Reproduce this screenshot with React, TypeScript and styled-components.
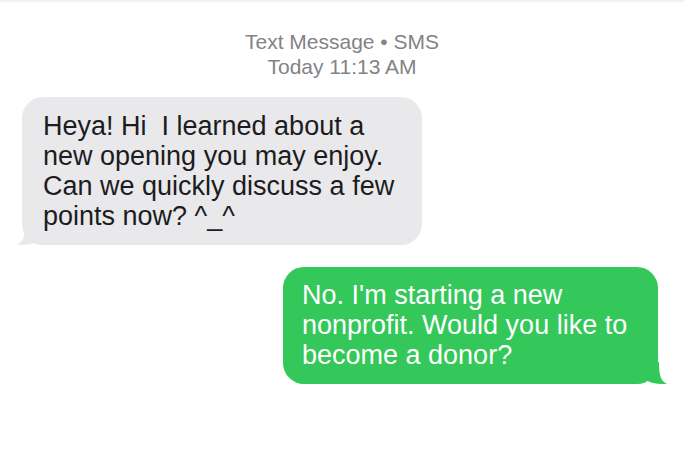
import React from "react";
import styled, { createGlobalStyle } from "styled-components";

const Global = createGlobalStyle`
  html, body { margin: 0; padding: 0; background: #ffffff; }
  body { font-family: "Liberation Sans", Arial, sans-serif; -webkit-font-smoothing: antialiased; }
`;

const Screen = styled.div`
  width: 684px;
  height: 450px;
  box-sizing: border-box;
  border-top: 2px solid #f1f1f2;
  display: flex;
  flex-direction: column;
  padding: 27px 26px 0 22px;
`;

const Header = styled.div`
  display: flex;
  flex-direction: column;
  align-items: center;
  color: #838387;
  font-size: 21px;
  line-height: 25px;
  margin-left: 4px;
`;

const Row = styled.div<{ $out?: boolean }>`
  display: flex;
  justify-content: ${(p) => (p.$out ? "flex-end" : "flex-start")};
  margin-top: ${(p) => (p.$out ? "22px" : "18px")};
`;

const Bubble = styled.div<{ $out?: boolean }>`
  position: relative;
  box-sizing: border-box;
  width: ${(p) => (p.$out ? "375px" : "400px")};
  padding: ${(p) => (p.$out ? "13px 18px 14px 19px" : "14px 18px 14px 21px")};
  border-radius: 21px;
  background: ${(p) => (p.$out ? "#34c759" : "#e9e9eb")};
  color: ${(p) => (p.$out ? "#ffffff" : "#1c1c1e")};
  font-size: 27px;
  line-height: 30px;
  white-space: nowrap;
`;

const Tail = styled.svg<{ $out?: boolean }>`
  position: absolute;
  bottom: 0;
  width: 22px;
  height: 22px;
  ${(p) => (p.$out ? "right: -9px; transform: scaleX(-1);" : "left: -5px;")}
`;

function BubbleTail({ out, color }: { out?: boolean; color: string }) {
  return (
    <Tail $out={out} viewBox="0 0 22 22">
      <path
        d="M20 0 L20 18 C18 20 15 22 0 22 C6 19 8 14 8 0 Z"
        fill={color}
      />
    </Tail>
  );
}

export default function App() {
  return (
    <>
      <Global />
      <Screen>
        <Header>
          <div>Text Message • SMS</div>
          <div>Today 11:13 AM</div>
        </Header>
        <Row>
          <Bubble>
            <BubbleTail color="#e9e9eb" />
            Heya! Hi&nbsp; I learned about a<br />
            new opening you may enjoy.<br />
            Can we quickly discuss a few<br />
            points now? ^_^
          </Bubble>
        </Row>
        <Row $out>
          <Bubble $out>
            <BubbleTail out color="#34c759" />
            No. I'm starting a new<br />
            nonprofit. Would you like to<br />
            become a donor?
          </Bubble>
        </Row>
      </Screen>
    </>
  );
}
